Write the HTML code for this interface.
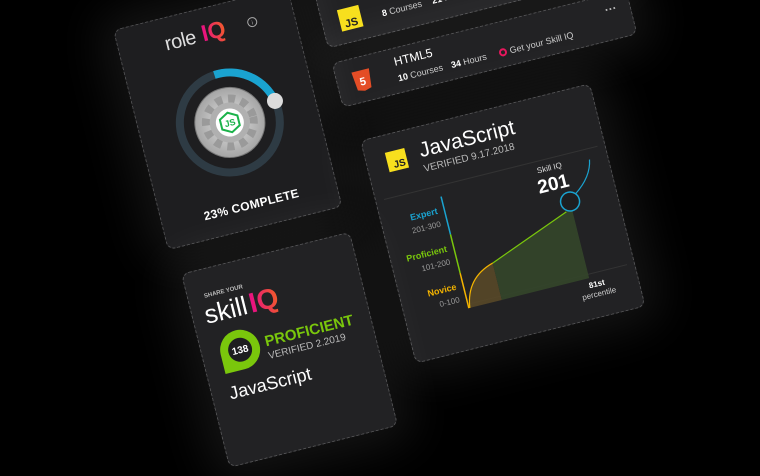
<!DOCTYPE html>
<html><head><meta charset="utf-8"><style>
html,body{margin:0;padding:0;background:#000;}
body{width:760px;height:400px;overflow:hidden;position:relative;font-family:"Liberation Sans",sans-serif;}
#plane{position:absolute;left:113px;top:30px;width:1px;height:1px;transform-origin:0 0;transform:rotate(-14deg);}
.card{position:absolute;background:#222224;border:1px dashed rgba(255,255,255,0.22);border-radius:8px;box-shadow:0 0 45px 16px rgba(255,255,255,0.08);box-sizing:border-box;}
svg{position:absolute;left:0;top:0;overflow:visible;}
</style></head><body>
<div id="plane">
 <div class="card" style="left:204px;top:-20px;width:304px;height:90px;"></div>
 <div class="card" style="left:204px;top:85px;width:304px;height:46px;"></div>
 <div class="card" style="left:0;top:0;width:180px;height:227px;background:#1e1e20;"></div>
 <div class="card" style="left:213px;top:167px;width:237px;height:230px;"></div>
 <div class="card" style="left:7px;top:253px;width:174px;height:200px;"></div>
 <svg width="600" height="460" viewBox="0 0 600 460">
  <defs>
   <linearGradient id="iq" x1="0" x2="1"><stop offset="0" stop-color="#e80a89"/><stop offset="1" stop-color="#f15b2a"/></linearGradient>
   <radialGradient id="gr"><stop offset="0" stop-color="#e4e4e4"/><stop offset="1" stop-color="#a5a5a5"/></radialGradient>
  </defs>
  <!-- role IQ card -->
  <text x="47" y="33" font-size="20" fill="#ddd" font-weight="300" letter-spacing="-0.5">role</text>
  <text x="85" y="33" font-size="23" fill="url(#iq)" font-weight="bold">IQ</text>
  <circle cx="137" cy="26" r="4.5" fill="none" stroke="#aaa" stroke-width="1"/>
  <text x="137" y="28.5" font-size="6" fill="#aaa" text-anchor="middle">i</text>
  <circle cx="91" cy="118" r="50" fill="none" stroke="#2e3b44" stroke-width="8"/>
  <path d="M 87.5 68.1 A 50 50 0 0 1 140.1 108.5" fill="none" stroke="#1aa3d0" stroke-width="8"/>
  <circle cx="140" cy="108" r="8" fill="#dcdcdc"/>
  <circle cx="91" cy="118" r="35" fill="url(#gr)" stroke="#777" stroke-width="1"/>
  <circle cx="91" cy="118" r="24" fill="none" stroke="#9a9a9a" stroke-width="8" stroke-dasharray="7 6"/>
  <circle cx="91" cy="118" r="20" fill="#b0b0b0"/>
  <circle cx="91" cy="118" r="14" fill="#fff"/>
  <polygon points="91,108 100,113 100,123 91,128 82,123 82,113" fill="none" stroke="#1bb24a" stroke-width="2"/>
  <text x="91" y="121.5" font-size="9" font-weight="bold" fill="#1bb24a" text-anchor="middle">JS</text>
  <text x="92" y="207" font-size="12" font-weight="bold" fill="#fff" text-anchor="middle" letter-spacing="0.3">23% COMPLETE</text>
  <!-- JS course card -->
  <rect x="222" y="35" width="22" height="22" fill="#f7df1e"/>
  <text x="240" y="54" font-size="11" font-weight="bold" fill="#222" text-anchor="end">JS</text>
  <text x="265" y="34" font-size="12" fill="#fff">JavaScript</text>
  <text x="265" y="52" font-size="9" fill="#ccc"><tspan font-weight="bold" fill="#fff">8</tspan> Courses <tspan dx="8" font-weight="bold" fill="#fff">21</tspan> Hours</text>
  <!-- HTML5 card -->
  <path d="M221 99 L239 99 L237 118 L230 120 L223 118 Z" fill="#e44d26"/>
  <text x="230" y="114" font-size="11" font-weight="bold" fill="#fff" text-anchor="middle">5</text>
  <text x="265" y="103" font-size="12" fill="#fff">HTML5</text>
  <text x="265" y="119" font-size="9" fill="#ccc"><tspan font-weight="bold" fill="#fff">10</tspan> Courses <tspan dx="6" font-weight="bold" fill="#fff">34</tspan> Hours</text>
  <circle cx="373" cy="116" r="3" fill="none" stroke="#e8175d" stroke-width="2"/>
  <text x="380" y="119" font-size="9" fill="#ccc">Get your Skill IQ</text>
  <text x="488" y="104" font-size="12" font-weight="bold" fill="#bbb" text-anchor="middle">···</text>
  <!-- Big JS card -->
  <rect x="234" y="185" width="20" height="20" fill="#f7df1e"/>
  <text x="252" y="202" font-size="10" font-weight="bold" fill="#222" text-anchor="end">JS</text>
  <text x="268" y="198" font-size="21" fill="#fff">JavaScript</text>
  <text x="268" y="213" font-size="10" fill="#bbb">VERIFIED 9.17.2018</text>
  <line x1="222" y1="230" x2="442" y2="230" stroke="#333" stroke-width="1"/>
  <line x1="280" y1="352" x2="442" y2="352" stroke="#333" stroke-width="1"/>
  <line x1="278" y1="241" x2="278" y2="280" stroke="#1aa3d0" stroke-width="1.5"/>
  <line x1="278" y1="280" x2="278" y2="320" stroke="#7ac70c" stroke-width="1.5"/>
  <line x1="278" y1="320" x2="278" y2="356" stroke="#f4b400" stroke-width="1.5"/>
  <text x="271" y="257" font-size="9" font-weight="bold" fill="#1aa3d0" text-anchor="end">Expert</text>
  <text x="271" y="270" font-size="8" fill="#999" text-anchor="end">201-300</text>
  <text x="271" y="296" font-size="9" font-weight="bold" fill="#7ac70c" text-anchor="end">Proficient</text>
  <text x="271" y="309" font-size="8" fill="#999" text-anchor="end">101-200</text>
  <text x="271" y="335" font-size="9" font-weight="bold" fill="#f4b400" text-anchor="end">Novice</text>
  <text x="271" y="348" font-size="8" fill="#999" text-anchor="end">0-100</text>
  <path d="M279 356 Q283 326 312 318 L312 356 Z" fill="#5a4a28" opacity="0.85"/>
  <path d="M312 318 L396 286 L402 286 L402 356 L312 356 Z" fill="#34452a" opacity="0.95"/>
  <path d="M279 356 Q283 326 312 318" fill="none" stroke="#f4b400" stroke-width="1.2"/>
  <path d="M312 318 L396 286" fill="none" stroke="#7ac70c" stroke-width="1.2"/>
  <path d="M409 271 Q428 258 431 241" fill="none" stroke="#1aa3d0" stroke-width="1.2"/>
  <circle cx="402" cy="277" r="9.5" fill="#1e1e20" stroke="#1aa3d0" stroke-width="1.5"/>
  <text x="390" y="242" font-size="8" fill="#ddd" text-anchor="middle">Skill IQ</text>
  <text x="390" y="262" font-size="19" font-weight="bold" fill="#fff" text-anchor="middle">201</text>
  <text x="408" y="366" font-size="8" font-weight="bold" fill="#fff" text-anchor="middle">81st</text>
  <text x="408" y="376" font-size="8" fill="#ccc" text-anchor="middle">percentile</text>
  <!-- Skill IQ share card -->
  <text x="24" y="282" font-size="6" font-weight="bold" fill="#bbb">SHARE YOUR</text>
  <text x="20" y="308" font-size="26" fill="#fff" font-weight="300">skill</text>
  <text x="66" y="308" font-size="28" font-weight="bold" fill="url(#iq)">IQ</text>
  <path d="M46 321 A20 20 0 1 1 46 361 L26 361 L26 341 A20 20 0 0 1 46 321 Z" fill="#7ac70c"/>
  <circle cx="46" cy="341" r="12" fill="#1e1e20"/>
  <text x="46" y="344.5" font-size="10" font-weight="bold" fill="#fff" text-anchor="middle">138</text>
  <text x="72" y="344" font-size="15" font-weight="bold" fill="#7ac70c">PROFICIENT</text>
  <text x="72" y="357" font-size="10" fill="#bbb">VERIFIED 2.2019</text>
  <text x="25" y="387" font-size="18" fill="#fff">JavaScript</text>
 </svg>
</div>
</body></html>
